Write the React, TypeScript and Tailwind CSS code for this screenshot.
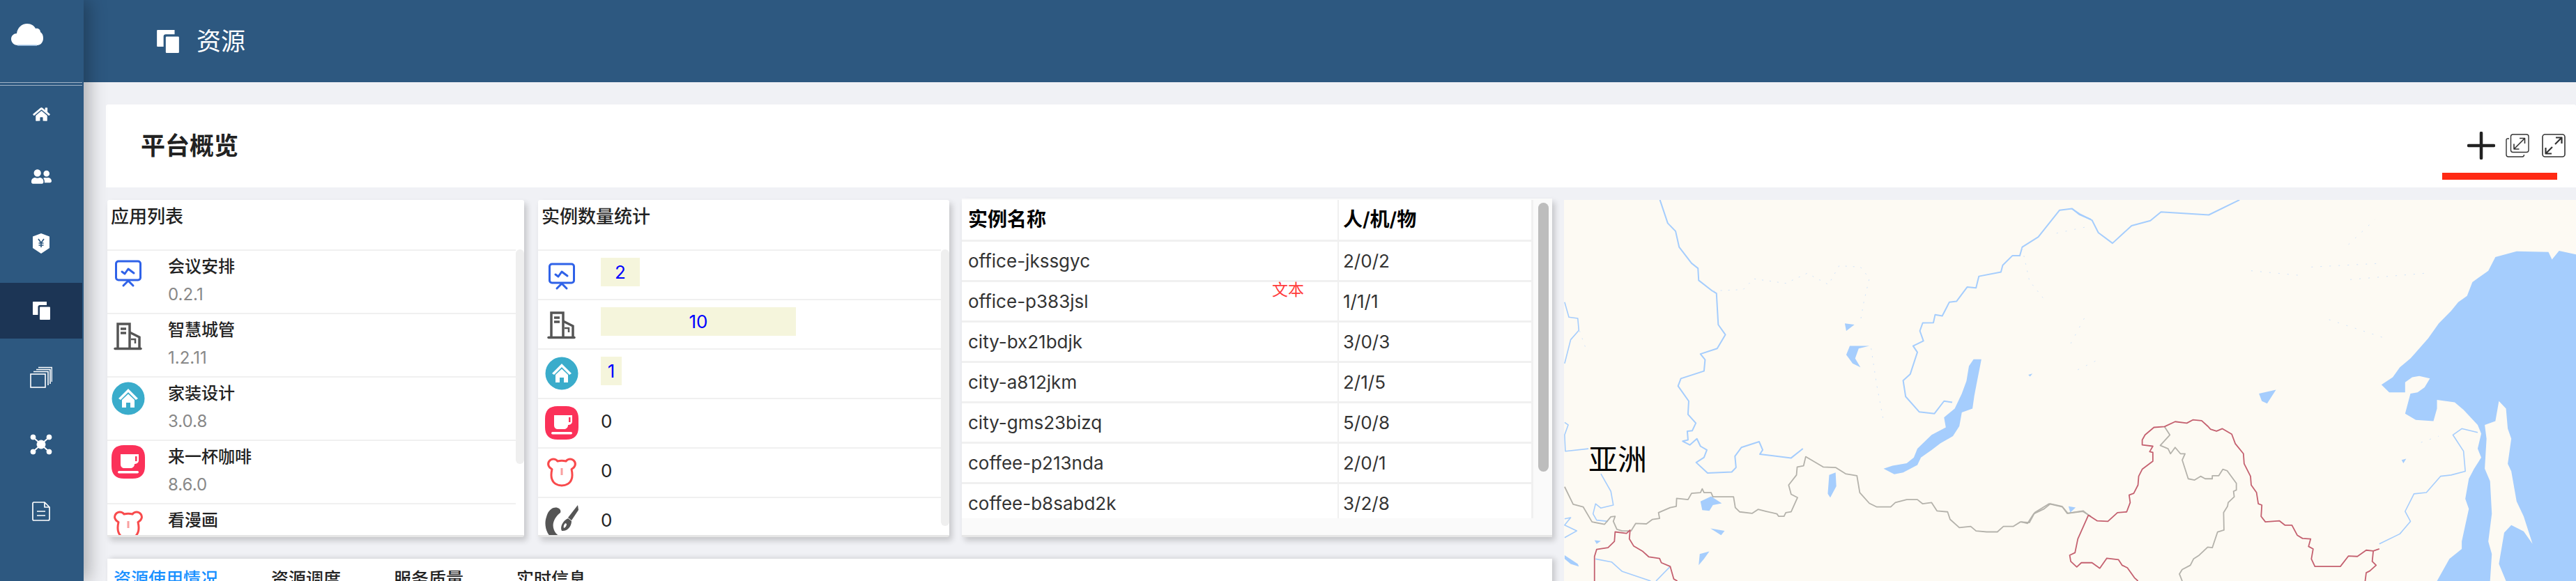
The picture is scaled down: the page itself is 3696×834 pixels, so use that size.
import { FaHome, FaUserFriends } from "react-icons/fa";
import type { ReactNode } from "react";

// 左侧应用 / 实例图标
function MonitorIcon() {
  return (
    <svg viewBox="0 0 48 48" className="w-12 h-12 shrink-0" fill="none" stroke="#2f62e8" strokeWidth="3" strokeLinecap="round" strokeLinejoin="round">
      <rect x="6.5" y="9" width="35" height="27" rx="3.5" />
      <polyline points="15,24 19,27 24,20 32,26" />
      <path d="M24 37 L17 44 M24 37 L31 44" />
    </svg>
  );
}

function BuildingIcon() {
  return (
    <svg viewBox="0 0 48 48" className="w-12 h-12 shrink-0" fill="none" stroke="#555" strokeWidth="3.5">
      <path d="M5 43.5 H42" strokeLinecap="round" />
      <path d="M9 43 V8 H26 V43" />
      <path d="M26 20 L40 27 V43" />
      <path d="M13 15 H21 M13 21 H21" />
      <path d="M28 30 H34 V36" strokeWidth="2.5" />
    </svg>
  );
}

function HouseIcon() {
  return (
    <svg viewBox="0 0 48 48" className="w-12 h-12 shrink-0">
      <circle cx="24" cy="24" r="23.5" fill="#3aaccb" />
      <path d="M24 10 L38 24 L35 26 L24 15 L13 26 L10 24 Z" fill="#fff" />
      <path d="M15 26 L24 17.5 L33 26 V37 H27 V30 H21 V37 H15 Z" fill="#fff" />
    </svg>
  );
}

function CoffeeIcon() {
  return (
    <svg viewBox="0 0 48 48" className="w-12 h-12 shrink-0">
      <path d="M18 0 H30 C42 0 48 6 48 18 V30 C48 42 42 48 30 48 H18 C6 48 0 42 0 30 V18 C0 6 6 0 18 0 Z" fill="#fb3159" />
      <path d="M13 13 H39 V22 C39 26 35 27 33 27 C33 31 30 33 27 33 H19 C15 33 13 31 13 27 Z" fill="#fff" />
      <rect x="34" y="16" width="2.5" height="7" fill="#fb3159" />
      <rect x="9" y="37" width="30" height="3.5" rx="1.7" fill="#fff" />
    </svg>
  );
}

function BearIcon() {
  return (
    <svg viewBox="0 0 48 48" className="w-12 h-12 shrink-0" fill="none" stroke="#f84a4c" strokeWidth="3" strokeLinejoin="round">
      <path d="M10 19.5 C5 17 3 12 6 8 C9 4 15 4 18 8 Q24 6.5 30 8 C33 4 39 4 42 8 C45 12 43 17 38 19.5 C39 24 40 29 38 34 C36 40 30 43 24 43 C18 43 12 40 10 34 C8 29 9 24 10 19.5 Z" />
      <rect x="22.5" y="18" width="3" height="10" fill="#f9a0a0" stroke="none" />
    </svg>
  );
}

function BrushIcon() {
  return (
    <svg viewBox="0 0 48 48" className="w-12 h-12 shrink-0" fill="#555">
      <path d="M12 4 C18 2 24 6 22 11 C14 17 9 27 13 36 C16 43 22 46 28 47 L10 47 C2 42 -2 28 2 17 C4 10 7 6 12 4 Z" />
      <path d="M47 0 L48 7 L38 22 L33 18 Z" />
      <path d="M33 19 L38 23 C38 31 32 38 24 37 C21 31 26 22 33 19 Z M29 26 C27 28 26 31 27 33 C30 32 31 29 31 27 Z" fillRule="evenodd" />
    </svg>
  );
}

// 侧边栏图标
function CopyIcon({ className }: { className: string }) {
  return (
    <svg viewBox="0 0 25 26" className={className} fill="currentColor">
      <path d="M0 1 C0 .4 .4 0 1 0 H20 V5 H10 C8.5 5 7.5 6 7.5 7.5 V19 H1 C.4 19 0 18.6 0 18 Z" />
      <rect x="10" y="7.5" width="15" height="18.5" rx="1" />
    </svg>
  );
}

function YenShieldIcon() {
  return (
    <svg viewBox="0 0 24 29" className="w-6 h-[29px]">
      <path d="M12 0 L24 4.5 V21 L12 29 L0 21 V4.5 Z" fill="#fff" />
      <path d="M8 8 L12 13.5 L16 8 M12 13.5 V20 M8.5 14 H15.5 M8.5 17 H15.5" stroke="#2d5880" strokeWidth="1.7" fill="none" />
    </svg>
  );
}

function StackIcon() {
  return (
    <svg viewBox="0 0 32 32" className="w-8 h-8" fill="none" stroke="#fff" strokeWidth="1.6">
      <rect x="1" y="11" width="21" height="19" />
      <path d="M5 7.5 H26 V27" />
      <path d="M9 4.5 H29 V25" />
      <path d="M12 1.5 H31.5 V22" />
    </svg>
  );
}

function NetworkIcon() {
  return (
    <svg viewBox="0 0 32 30" className="w-8 h-[30px]" fill="#fff" stroke="#fff">
      <path d="M5 5 L16 15 L27 5 M5 25 L16 15 L27 25" strokeWidth="2" fill="none" />
      <circle cx="16" cy="15" r="6" />
      <circle cx="4.5" cy="4.5" r="3.5" />
      <circle cx="27.5" cy="4.5" r="3.5" />
      <circle cx="4.5" cy="25.5" r="3.5" />
      <circle cx="27.5" cy="25.5" r="3.5" />
    </svg>
  );
}

function FileIcon() {
  return (
    <svg viewBox="0 0 26 28" className="w-[26px] h-7" fill="none" stroke="#fff" strokeWidth="1.7" strokeLinejoin="round">
      <path d="M2.5 1 H18 L25 8 V25 C25 26 24 27 23 27 H2.5 C1.5 27 1 26 1 25 V3 C1 2 1.5 1 2.5 1 Z" />
      <path d="M18 1 V8 H25" />
      <path d="M7 14 H19 M7 20 H19" />
    </svg>
  );
}

function CloudIcon() {
  return (
    <svg viewBox="0 0 46 34" className="w-[46px] h-[34px]">
      <path d="M10 33 C3 33 0 28 0 24 C0 19 4 16 8 16 C9 8 15 2 23 2 C29 2 33 5 35 9 C37 8 42 9 42 14 C45 16 46 19 46 23 C46 29 42 33 37 33 Z" fill="#fff" />
      <path d="M9 33 H37" stroke="#a9c9ea" strokeWidth="1.5" />
    </svg>
  );
}

// 右上角工具图标
function PlusIcon() {
  return (
    <svg viewBox="0 0 40 40" className="w-10 h-10" stroke="#222" strokeWidth="4.5" strokeLinecap="round">
      <path d="M20 2 V38 M2 20 H38" />
    </svg>
  );
}

function RestoreIcon() {
  return (
    <svg viewBox="0 0 34 34" className="w-[34px] h-[34px] ml-[15px]" fill="none" stroke="#333" strokeWidth="1.4" strokeLinejoin="round">
      <rect x="7.5" y="1" width="25.5" height="25.5" rx="3" />
      <path d="M5 7 H3 C1.8 7 1 7.8 1 9 V30 C1 32 2 33 4 33 H24 C25.5 33 26.5 32 26.5 30" />
      <path d="M12 22 L27 7 M20 6.5 H27.5 V14 M12 14.5 V22 H19.5" strokeWidth="1.6" />
    </svg>
  );
}

function ExpandIcon() {
  return (
    <svg viewBox="0 0 34 34" className="w-[34px] h-[34px] ml-[18px]" fill="none" stroke="#333" strokeLinejoin="round">
      <rect x="1" y="1" width="32" height="32" rx="3.5" strokeWidth="1.6" />
      <path d="M19 15 L28 6 M20 5.5 H28.5 V14 M15 19 L6 28 M14 28.5 H5.5 V20" strokeWidth="2.2" />
    </svg>
  );
}

const river = "M356 47 378 140 400 172 410 235 445 300 463 320 465 368 503 410 515 420 520 545 540 585 517 640 470 662 483 685 480 730 415 760 407 790 437 850 435 903 457 938 447 968 433 970 435 1005 420 1010 440 1025 460 1000 470 1030 488 1045 480 1075 458 1095 490 1137 558 1133 570 1115 567 1070 585 1035 635 1012 645 1045 637 1062 725 1077 758 1040";
const riverEast = "M1178 855 1155 850 1128 900 1085 893 1047 832 1040 768 1060 742 1080 655 1068 630 1097 610 1087 570 1095 538 1125 537 1130 505 1150 510 1170 455 1190 452 1220 395 1245 398 1253 352 1315 335 1320 308 1347 270 1368 270 1375 235 1420 195 1480 88 1515 82 1535 105 1568 125";
const riversWest = "M88 455 100 515 125 520 128 568 105 605 88 700 M88 935 98 945 88 985 90 1050 155 1040 M190 1140 218 1210 225 1265 190 1277 175 1260 168 1300 178 1325 210 1330 M88 1320 105 1315 88 1345 122 1368 88 1395 M175 1480 220 1492 250 1530 330 1568 M385 1510 345 1568";
const grayBorder = "M88 1192 112 1262 140 1272 165 1332 200 1342 218 1312 230 1310 225 1330 235 1362 250 1368 275 1368 288 1338 318 1340 335 1322 355 1318 352 1295 385 1275 402 1270 403 1238 435 1243 445 1218 470 1215 475 1200 480 1215 500 1215 505 1232 563 1232 568 1275 580 1292 615 1298 632 1282 655 1290 685 1300 690 1310 705 1310 710 1295 725 1292 743 1235 725 1222 718 1185 740 1145 742 1113 760 1108 766 1072 815 1113 850 1115 878 1140 910 1148 918 1215 945 1258 965 1272 1005 1272 1018 1255 1050 1243 1080 1243 1095 1260 1120 1255 1135 1288 1165 1292 1172 1322 1198 1355 1230 1350 1245 1368 1275 1372 1305 1372 1322 1350 1350 1350 1370 1332 1395 1335 1410 1295 1450 1260 1488 1272 1503 1298 1545 1290 1568 1310";
const redBorderWest = "M172 1568 172 1470 178 1442 210 1435 228 1410 230 1372 262 1378 272 1365 270 1400 282 1428 308 1450 325 1472 355 1478 360 1495 385 1510 395 1560 405 1568";
const baikal = "M1238 683 1260 683 1255 720 1248 770 1240 830 1235 880 1205 895 1198 950 1180 990 1145 1018 1120 1045 1090 1075 1080 1105 1040 1135 1015 1142 985 1120 1010 1108 1050 1098 1070 1075 1080 1040 1120 985 1160 955 1155 915 1185 880 1205 820 1218 770 1225 710Z";
const lakes = "M890 630 945 630 915 640 905 680 920 715 898 700 880 665Z M470 1250 500 1230 530 1258 505 1265 495 1288 475 1285Z M832 1145 850 1135 852 1190 835 1235 828 1220Z M498 1358 538 1368 528 1385Z M468 1460 495 1450 480 1480 465 1505Z M88 1465 125 1500 128 1510 105 1500 88 1480Z M876 540 903 545 880 570Z M1505 1270 1525 1275 1510 1295Z M172 1405 190 1408 178 1420Z";

const amur = "M1012 1420 1070 1380 1100 1330 1085 1290 1110 1220 1145 1215 1185 1150 1215 1145 1255 1130 1250 1050 1220 985 1245 960 1290 975";
const riverFar = "M143 82 165 103 200 128 218 178 258 220 312 150 365 130 395 95 530 107 617 47";
const sea = "M1568 265 1520 250 1500 285 1490 255 1400 252 1340 275 1320 330 1275 375 1260 430 1235 455 1215 490 1180 540 1150 600 1100 680 1070 715 1050 755 1018 785 1040 815 1085 815 1085 775 1105 755 1125 750 1155 760 1140 795 1120 815 1100 820 1085 900 1115 925 1165 930 1175 880 1175 845 1225 855 1250 885 1290 945 1300 980 1290 1040 1300 1075 1280 1120 1265 1160 1255 1240 1265 1280 1245 1410 1245 1440 1210 1480 1175 1568 1325 1568 1330 1460 1320 1410 1330 1300 1325 1170 1310 1120 1315 1000 1310 945 1340 930 1350 850 1370 880 1375 960 1385 1000 1375 1100 1385 1130 1400 1250 1420 1310 1445 1420 1420 1370 1385 1345 1365 1375 1350 1500 1370 1568 1568 1568Z";
const redLoop = "M190 1305 215 1328 245 1330 272 1295 298 1292 308 1255 305 1225 318 1218 330 1185 332 1150 342 1122 372 1090 372 1055 363 1052 372 1030 342 1025 342 1005 350 985 375 955 405 952 435 932 468 938 485 925 510 928 527 950 535 962 552 970 568 960 595 982 605 1020 628 1060 630 1100 648 1150 650 1185 665 1215 670 1260 680 1265 678 1310 690 1332 730 1328 745 1345 765 1345 780 1385 795 1398 818 1400 812 1430 825 1440 820 1480 830 1510 902 1510 925 1468 950 1470 975 1445 995 1448 1012 1440 M995 1448 992 1490 1003 1505 985 1528 975 1535 972 1568 M190 1305 160 1400 152 1455 137 1465 140 1490 157 1512 170 1495 200 1495 222 1517 242 1477 275 1483 285 1505 300 1515 320 1555 330 1568";
const grayEast = "M0 1332 18 1338 35 1300 65 1280 82 1260 115 1270 130 1298 175 1288 190 1305 M405 952 420 985 393 1027 415 1040 422 1060 435 1035 450 1060 463 1060 455 1085 472 1160 490 1165 507 1150 520 1160 540 1160 540 1148 558 1148 570 1122 582 1128 608 1178 608 1205 600 1210 602 1232 585 1255 583 1270 572 1295 573 1365 555 1372 540 1435 527 1433 503 1465 487 1480 478 1505 455 1522 447 1540 455 1568";

// 地图：坐标按整张截图的像素，分两段描
function WorldMap() {
  return (
    <div className="relative flex-1 h-[547px] ml-[17px] bg-[#fdfaf3] overflow-hidden">
      <svg viewBox="2244 287 1452 547" className="w-full h-full" fill="none" strokeLinejoin="round">
        <g transform="translate(2200 270) scale(.5102 .3597)">
          <path d={river} stroke="#a5cdfd" strokeWidth="2" vectorEffect="non-scaling-stroke" />
          <path d={riverEast} stroke="#a5cdfd" strokeWidth="2" vectorEffect="non-scaling-stroke" />
          <path d={riversWest} stroke="#a5cdfd" strokeWidth="1.6" vectorEffect="non-scaling-stroke" />
          <path d="M505 410 590 405 620 362 710 380 770 340 830 385 860 310 920 315 945 360 930 450 920 530 M130 570 150 650 M950 640 965 780 985 930 M1375 240 1395 370 1440 450" stroke="#cfe3fb" strokeWidth="1" strokeDasharray="2 9" vectorEffect="non-scaling-stroke" />
          <path d={baikal} fill="#a5cdfd" />
          <path d={lakes} fill="#a5cdfd" />
          <path d={grayBorder} stroke="#b4b2ab" strokeWidth="1.8" vectorEffect="non-scaling-stroke" />
          <path d={redBorderWest} stroke="#c4606f" strokeWidth="1.8" vectorEffect="non-scaling-stroke" />
        </g>
        <g transform="translate(2900 270) scale(.5077 .3597)">
          <path d={sea} fill="#a5cdfd" />
          <path d={riverFar} stroke="#a5cdfd" strokeWidth="2" vectorEffect="non-scaling-stroke" />
          <path d={amur} stroke="#a5cdfd" strokeWidth="1.6" vectorEffect="non-scaling-stroke" />
          <path d="M100 180 200 150 M925 225 1000 125 M820 315 1020 300 M930 365 1140 340 M650 330 800 350 M140 620 180 515 M160 725 210 690 M870 525 1030 600 M1130 1015 1180 990" stroke="#cfe3fb" strokeWidth="1" strokeDasharray="2 11" vectorEffect="non-scaling-stroke" />
          <path d="M672 820 720 805 695 860 680 850Z M1075 1085 1088 1080 1080 1098Z M20 745 32 740 25 752Z" fill="#a5cdfd" />
          <path d={grayEast} stroke="#b4b2ab" strokeWidth="1.8" vectorEffect="non-scaling-stroke" />
          <path d={redLoop} stroke="#c4606f" strokeWidth="1.8" vectorEffect="non-scaling-stroke" />
        </g>
      </svg>
      <span className="absolute left-[35px] top-[347px] text-[42px] leading-[52px] text-black">亚洲</span>
    </div>
  );
}

type NavItem = { icon: ReactNode; active?: boolean };

const navItems: NavItem[] = [
  { icon: <FaHome className="w-[25px] h-[22px] mt-[12px]" /> },
  { icon: <FaUserFriends className="w-[29px] h-[25px]" /> },
  { icon: <YenShieldIcon /> },
  { icon: <CopyIcon className="w-[25px] h-[26px]" />, active: true },
  { icon: <StackIcon /> },
  { icon: <NetworkIcon /> },
  { icon: <FileIcon /> },
];

const apps: { name: string; version: string; icon: ReactNode }[] = [
  { name: "会议安排", version: "0.2.1", icon: <MonitorIcon /> },
  { name: "智慧城管", version: "1.2.11", icon: <BuildingIcon /> },
  { name: "家装设计", version: "3.0.8", icon: <HouseIcon /> },
  { name: "来一杯咖啡", version: "8.6.0", icon: <CoffeeIcon /> },
  { name: "看漫画", version: "", icon: <BearIcon /> },
];

const counts: { icon: ReactNode; value: number; bar?: string }[] = [
  { icon: <MonitorIcon />, value: 2, bar: "w-[56px]" },
  { icon: <BuildingIcon />, value: 10, bar: "w-[280px]" },
  { icon: <HouseIcon />, value: 1, bar: "w-[30px]" },
  { icon: <CoffeeIcon />, value: 0 },
  { icon: <BearIcon />, value: 0 },
  { icon: <BrushIcon />, value: 0 },
];

const instances = [
  ["office-jkssgyc", "2/0/2"],
  ["office-p383jsl", "1/1/1"],
  ["city-bx21bdjk", "3/0/3"],
  ["city-a812jkm", "2/1/5"],
  ["city-gms23bizq", "5/0/8"],
  ["coffee-p213nda", "2/0/1"],
  ["coffee-b8sabd2k", "3/2/8"],
];

const tabs = ["资源调度", "服务质量", "实时信息"];

export default function App() {
  return (
    <div className="flex w-[3696px] h-[834px] overflow-hidden bg-[#f0f1f5] font-[family-name:Inter,'Noto_Sans_CJK_SC',sans-serif] text-[#222]">
      {/* 侧边栏 */}
      <aside className="relative z-10 w-[120px] shrink-0 bg-[#2d5880] pr-[2px] text-white shadow-[8px_0_24px_rgba(0,0,0,0.28)]">
        <div className="h-[118px] pt-[32px] pl-[16px]">
          <CloudIcon />
        </div>
        <div className="h-[5px] border-y border-[#9fb2c6]" />
        <nav className="-mt-[15px]">
          {navItems.map((item, i) => (
            <div key={i} className="flex items-center h-[96px]">
              <div className={`flex items-center justify-center w-full h-[80px] mt-[3px] ${item.active ? "bg-[#1c3555]" : ""}`}>
                {item.icon}
              </div>
            </div>
          ))}
        </nav>
      </aside>

      <main className="flex-1 min-w-0">
        {/* 顶栏 */}
        <header className="flex items-center h-[118px] pl-[105px] bg-[#2d5880] text-white">
          <CopyIcon className="w-[32px] h-[33px]" />
          <span className="ml-[25px] text-[35px] leading-none">资源</span>
        </header>

        <div className="pl-[32px] pt-[32px]">
          <div className="flex items-center h-[119px] pl-[50px] pr-[15px] bg-white rounded-t-[3px]">
            <h1 className="text-[35px] font-semibold">平台概览</h1>
            <div className="relative ml-auto flex items-center -mt-[2px]">
              <PlusIcon />
              <RestoreIcon />
              <ExpandIcon />
              <div className="absolute left-[-36px] top-[59px] w-[165px] h-[10px] bg-[#ff2a14]" />
            </div>
          </div>

          <div className="flex items-start pl-[2px] pt-[18px]">
            <div className="w-[2073px] shrink-0">
              <div className="flex h-[484px]">
                {/* 应用列表 */}
                <section className="w-[598px] rounded-[3px] bg-white border-b-[3px] border-[#e6e6e6] shadow-[4px_5px_8px_rgba(0,0,0,0.18)] overflow-hidden">
                  <h2 className="h-[71px] pt-[8px] pl-[5px] text-[26px] leading-[32px] font-medium">应用列表</h2>
                  <div className="flex h-[410px] overflow-hidden">
                    <ul className="flex-1">
                      {apps.map((app) => (
                        <li key={app.name} className="flex h-[91px] pl-[6px] pt-[6px] border-t-2 border-[#f0f0f0]">
                          {app.icon}
                          <div className="ml-[33px]">
                            <div className="mt-[1px] text-[24px] leading-[32px] font-medium">{app.name}</div>
                            <div className="mt-[8px] text-[24px] leading-[32px] text-[#888]">{app.version}</div>
                          </div>
                        </li>
                      ))}
                    </ul>
                    <div className="w-[12px] h-[308px] rounded-[6px] bg-[#efefef]" />
                  </div>
                </section>

                {/* 实例数量统计 */}
                <section className="w-[590px] ml-[20px] rounded-[3px] bg-white border-b-[3px] border-[#e6e6e6] shadow-[4px_5px_8px_rgba(0,0,0,0.18)] overflow-hidden">
                  <h2 className="h-[71px] pt-[8px] pl-[5px] text-[26px] leading-[32px] font-medium">实例数量统计</h2>
                  <div className="flex h-[410px] overflow-hidden">
                    <ul className="flex-1">
                      {counts.map((row, i) => (
                        <li key={i} className="flex h-[71px] pl-[10px] pt-[10px] border-t-2 border-[#f0f0f0]">
                          {row.icon}
                          {row.bar ? (
                            <div className={`${row.bar} h-[41px] ml-[32px] flex items-center justify-center bg-[#f5f5dc] text-[26px] text-[#0000ff]`}>
                              {row.value}
                            </div>
                          ) : (
                            <div className="ml-[32px] h-[40px] text-[26px] leading-[44px]">{row.value}</div>
                          )}
                        </li>
                      ))}
                    </ul>
                    <div className="w-[12px] h-[397px] rounded-[6px] bg-[#efefef]" />
                  </div>
                </section>

                {/* 实例表 */}
                <section className="relative w-[847px] ml-[18px] -mt-[2px] h-[486px] flex bg-[#fafafa] border-b-[3px] border-[#e6e6e6] shadow-[4px_5px_8px_rgba(0,0,0,0.18)]">
                  <div className="w-[820px] h-[459px] pt-[2px] overflow-hidden">
                    <table className="w-full table-fixed border-collapse bg-white">
                      <thead>
                        <tr className="h-[58px] text-left text-[28px] text-black">
                          <th className="w-[540px] pl-[9px] font-semibold border-r-2 border-b-[3px] border-[#f0f0f0]">实例名称</th>
                          <th className="pl-[6px] font-semibold border-r-[3px] border-b-[3px] border-[#f0f0f0]">人/机/物</th>
                        </tr>
                      </thead>
                      <tbody>
                        {instances.map(([name, stats]) => (
                          <tr key={name} className="h-[58px] text-[26px] text-[#333]">
                            <td className="pl-[9px] border-r-2 border-b-[3px] border-[#f0f0f0]">{name}</td>
                            <td className="pl-[6px] border-r-[3px] border-b-[3px] border-[#f0f0f0]">{stats}</td>
                          </tr>
                        ))}
                      </tbody>
                    </table>
                  </div>
                  <div className="ml-[7px] mt-[6px] w-[15px] h-[386px] rounded-[8px] bg-[#bdbdbd]" />
                  <span className="absolute left-[445px] top-[116px] text-[23px] leading-[30px] text-[#ff3b3b]">文本</span>
                </section>
              </div>

              {/* 底部标签 */}
              <div className="flex h-[60px] mt-[31px] pl-[9px] pt-[14px] bg-white shadow-[4px_0_8px_rgba(0,0,0,0.18)] text-[25px] leading-[30px] font-medium">
                <span className="text-[#1890ff]">资源使用情况</span>
                {tabs.map((t) => (
                  <span key={t} className="ml-[76px]">{t}</span>
                ))}
              </div>
            </div>
            <WorldMap />
          </div>
        </div>
      </main>
    </div>
  );
}
